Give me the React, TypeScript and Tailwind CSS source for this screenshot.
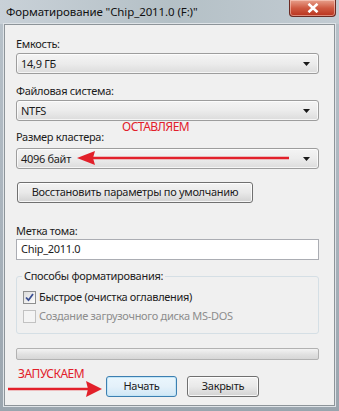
import React from "react";

const font = { fontFamily: '"Noto Sans", "Open Sans", sans-serif' };

function Caret() {
  return (
    <svg width="7" height="4" viewBox="0 0 7 4" className="shrink-0">
      <path d="M0 0 H7 L3.5 4 Z" fill="#1a1a1a" />
    </svg>
  );
}

function Combo({ value, children }: { value: string; children?: React.ReactNode }) {
  return (
    <div className="relative flex h-[21px] w-[303px] items-center justify-between rounded-[3px] border border-[#9d9d9d] bg-gradient-to-b from-[#f4f4f4] via-[#ececec] to-[#dcdcdc] pl-[4px] pr-[8px] text-[11px] tracking-[-0.3px] text-[#1c1c1c] shadow-[inset_0_0_0_1px_rgba(255,255,255,0.7)]">
      <span className="leading-none">{value}</span>
      <Caret />
      {children}
    </div>
  );
}

function WinButton({
  label,
  width,
  focused,
}: {
  label: string;
  width: string;
  focused?: boolean;
}) {
  return (
    <button
      type="button"
      className={`flex h-[21px] ${width} shrink-0 items-center justify-center whitespace-nowrap rounded-[3px] border text-[11px] tracking-[-0.3px] text-[#1c1c1c] ${
        focused
          ? "border-[#3c7fb1] bg-gradient-to-b from-[#eaf6fd] via-[#e4f1fa] to-[#cfe7f6] shadow-[inset_0_0_0_1px_#c4e5f6]"
          : "border-[#707070] bg-gradient-to-b from-[#f3f3f3] via-[#e9e9e9] to-[#d2d2d2] shadow-[inset_0_0_0_1px_rgba(255,255,255,0.8)]"
      }`}
    >
      {label}
    </button>
  );
}

function Label({ text, className = "" }: { text: string; className?: string }) {
  return (
    <div className={`h-[16px] text-[11px] leading-[16px] tracking-[-0.3px] text-[#1c1c1c] ${className}`}>
      {text}
    </div>
  );
}

function RedArrowLeft({ length }: { length: number }) {
  return (
    <svg width={length} height="16" viewBox={`0 0 ${length} 16`}>
      <line x1="14" y1="8" x2={length} y2="8" stroke="#e2202a" strokeWidth="2.5" />
      <path d="M0 8 L18 1 L16 8 L18 15 Z" fill="#e2202a" />
    </svg>
  );
}

function RedArrowRight({ length }: { length: number }) {
  return (
    <svg width={length} height="18" viewBox={`0 0 ${length} 18`}>
      <line x1="0" y1="9" x2={length - 14} y2="9" stroke="#e2202a" strokeWidth="2.5" />
      <path d={`M${length} 9 L${length - 16} 1 L${length - 14} 9 L${length - 16} 17 Z`} fill="#e2202a" />
    </svg>
  );
}

export default function App() {
  return (
    <div
      style={font}
      className="h-[411px] w-[339px] overflow-hidden bg-gradient-to-b from-[#b9c3cb] via-[#aab4bd] to-[#9aa5ae]"
    >
      <div className="flex h-[24px] items-start justify-between bg-gradient-to-r from-[#c9d1d8] via-[#b4c0c6] to-[#c2cbd2] pl-[6px] pr-[3px]">
        <span className="mt-[4px] text-[11.5px] leading-[16px] tracking-[-0.1px] text-[#111]">
          Форматирование "Chip_2011.0 (F:)"
        </span>
        <div className="flex h-[17px] w-[47px] items-center justify-center rounded-b-[4px] border border-t-0 border-[#6b2a22] bg-gradient-to-b from-[#e7a08c] via-[#cf5a42] to-[#b8311c] shadow-[inset_0_0_0_1px_rgba(255,220,210,0.5)]">
          <svg width="12" height="10" viewBox="0 0 12 10">
            <path d="M1.5 0.8 L10.5 9.2 M10.5 0.8 L1.5 9.2" stroke="#fff" strokeWidth="2.6" />
          </svg>
        </div>
      </div>

      <div className="mx-[4px] h-[382px] border border-[#8d9499] bg-[#f0f0f0] pl-[11px] shadow-[0_0_0_1px_#dfe4e8]">
        <Label text="Емкость:" className="mt-[11px]" />
        <div className="mt-[1px]">
          <Combo value="14,9 ГБ" />
        </div>

        <Label text="Файловая система:" className="mt-[9px]" />
        <div className="mt-[1px]">
          <Combo value="NTFS" />
        </div>

        <div className="relative mt-[8px]">
          <Label text="Размер кластера:" />
          <span className="absolute left-[106px] top-[-10px] text-[12px] leading-[16px] tracking-[-0.5px] text-[#e2202a]">
            ОСТАВЛЯЕМ
          </span>
        </div>
        <div className="mt-[3px]">
          <Combo value="4096 байт">
            <span className="absolute left-[60px] top-[1px]">
              <RedArrowLeft length={212} />
            </span>
          </Combo>
        </div>

        <div className="ml-[1px] mt-[13px] flex">
          <WinButton label="Восстановить параметры по умолчанию" width="w-[236px]" />
        </div>

        <Label text="Метка тома:" className="mt-[20px]" />
        <div className="flex h-[21px] w-[303px] items-center border border-[#abadb3] bg-white pl-[4px] text-[11px] tracking-[-0.3px] text-[#1c1c1c]">
          Chip_2011.0
        </div>

        <div className="relative mt-[16px] h-[58px] w-[303px] rounded-[3px] border border-[#d5dfe5]">
          <span className="absolute left-[5px] top-[-9px] bg-[#f0f0f0] px-[2px] text-[11px] leading-[16px] tracking-[-0.3px] text-[#1c1c1c]">
            Способы форматирования:
          </span>
          <div className="mt-[12px] flex items-center gap-[3px] pl-[6px]">
            <div className="flex h-[13px] w-[13px] items-center justify-center border border-[#8e8f8f] bg-gradient-to-br from-[#dcdcdc] to-[#fdfdfd]">
              <svg width="9" height="9" viewBox="0 0 9 9">
                <path d="M1 4.5 L3.5 7.2 L8 1" stroke="#3b4f92" strokeWidth="1.8" fill="none" />
              </svg>
            </div>
            <span className="text-[11px] leading-[16px] tracking-[-0.3px] text-[#1c1c1c]">
              Быстрое (очистка оглавления)
            </span>
          </div>
          <div className="mt-[3px] flex items-center gap-[3px] pl-[6px]">
            <div className="h-[13px] w-[13px] border border-[#c2c2c2] bg-[#f4f4f4]" />
            <span className="text-[11px] leading-[16px] tracking-[-0.3px] text-[#8d8d8d]">
              Создание загрузочного диска MS-DOS
            </span>
          </div>
        </div>

        <div className="mt-[14px] h-[12px] w-[303px] rounded-[2px] border border-[#b2b2b2] bg-gradient-to-b from-[#f3f3f3] via-[#e2e2e2] to-[#d6d6d6]" />

        <div className="relative mt-[16px] flex gap-[10px] pl-[90px]">
          <span className="absolute left-[2px] top-[-10px] text-[12px] leading-[16px] tracking-[-0.5px] text-[#e2202a]">
            ЗАПУСКАЕМ
          </span>
          <span className="absolute left-[-8px] top-[4px]">
            <RedArrowRight length={94} />
          </span>
          <WinButton label="Начать" width="w-[71px]" focused />
          <WinButton label="Закрыть" width="w-[72px]" />
        </div>
      </div>
    </div>
  );
}
